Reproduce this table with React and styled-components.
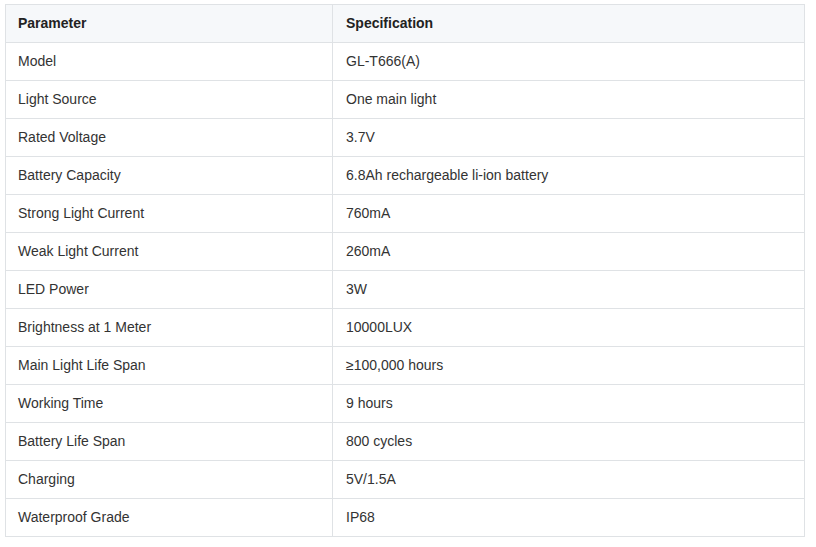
import React from "react";
import styled, { createGlobalStyle } from "styled-components";

const Global = createGlobalStyle`
  html, body { margin: 0; padding: 0; background: #fff; }
  body { font-family: "Liberation Sans", Arial, sans-serif; color: #333; }
`;

const Page = styled.div`
  padding: 4px 0 0 5px;
`;

const Table = styled.table`
  border-collapse: collapse;
  width: 800px;
  font-size: 14px;
  line-height: 20px;
  color: #333;
`;

const HeadCell = styled.th`
  background: #f6f8fa;
  border: 1px solid #dfe2e5;
  height: 38px;
  padding: 0 12px 2px ${(p) => (p.$first ? "12px" : "13px")};
  text-align: left;
  font-weight: bold;
  color: #222;
  width: ${(p) => (p.$first ? "327px" : "auto")};
  box-sizing: border-box;
`;

const Cell = styled.td`
  border: 1px solid #dfe2e5;
  height: 38px;
  padding: 0 12px 2px ${(p) => (p.$first ? "12px" : "13px")};
  box-sizing: border-box;
`;

const rows = [
  ["Model", "GL-T666(A)"],
  ["Light Source", "One main light"],
  ["Rated Voltage", "3.7V"],
  ["Battery Capacity", "6.8Ah rechargeable li-ion battery"],
  ["Strong Light Current", "760mA"],
  ["Weak Light Current", "260mA"],
  ["LED Power", "3W"],
  ["Brightness at 1 Meter", "10000LUX"],
  ["Main Light Life Span", "≥100,000 hours"],
  ["Working Time", "9 hours"],
  ["Battery Life Span", "800 cycles"],
  ["Charging", "5V/1.5A"],
  ["Waterproof Grade", "IP68"],
];

export default function App() {
  return (
    <Page>
      <Global />
      <Table>
        <thead>
          <tr>
            <HeadCell $first>Parameter</HeadCell>
            <HeadCell>Specification</HeadCell>
          </tr>
        </thead>
        <tbody>
          {rows.map(([k, v]) => (
            <tr key={k}>
              <Cell $first>{k}</Cell>
              <Cell>{v}</Cell>
            </tr>
          ))}
        </tbody>
      </Table>
    </Page>
  );
}
